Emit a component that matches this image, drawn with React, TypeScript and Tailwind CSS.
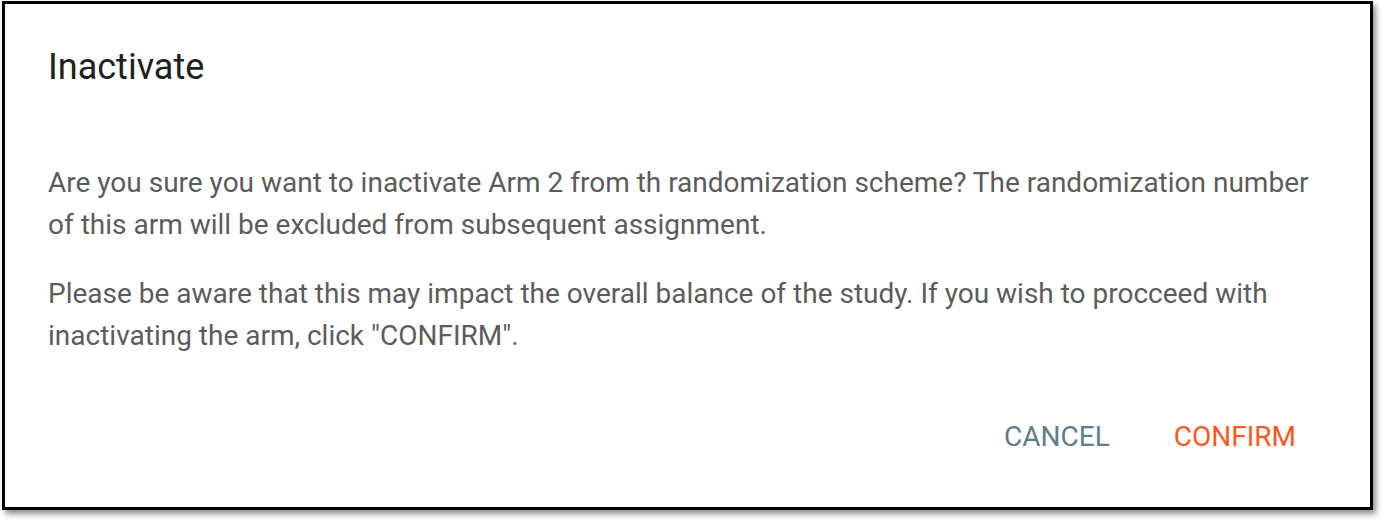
export default function App() {
  return (
    <div className="w-[1384px] h-[520px] bg-white pl-[2px] pt-[1px]" style={{ fontFamily: 'Roboto, sans-serif' }}>
      <div className="w-[1371px] h-[509px] border-[3px] border-black bg-white shadow-[3px_4px_6px_rgba(0,0,0,0.45)] flex flex-col px-[43px]">
        <h2 className="mt-[41px] text-[36px] leading-[44px] text-[#212121] font-normal">Inactivate</h2>
        <div className="mt-[73px] max-w-[1275px] text-[28px] leading-[42px] text-[#5c5c5c]">
          <p>
            Are you sure you want to inactivate Arm 2 from th randomization scheme? The randomization number of this arm will be excluded from subsequent assignment.
          </p>
          <p className="mt-[27px]">
            Please be aware that this may impact the overall balance of the study. If you wish to procceed with inactivating the arm, click "CONFIRM".
          </p>
        </div>
        <div className="mt-auto mb-[56px] flex justify-end gap-[64px] pr-[31px] text-[28px] leading-[28px]">
          <button className="text-[#607d8b]">CANCEL</button>
          <button className="text-[#ff5722]">CONFIRM</button>
        </div>
      </div>
    </div>
  );
}
